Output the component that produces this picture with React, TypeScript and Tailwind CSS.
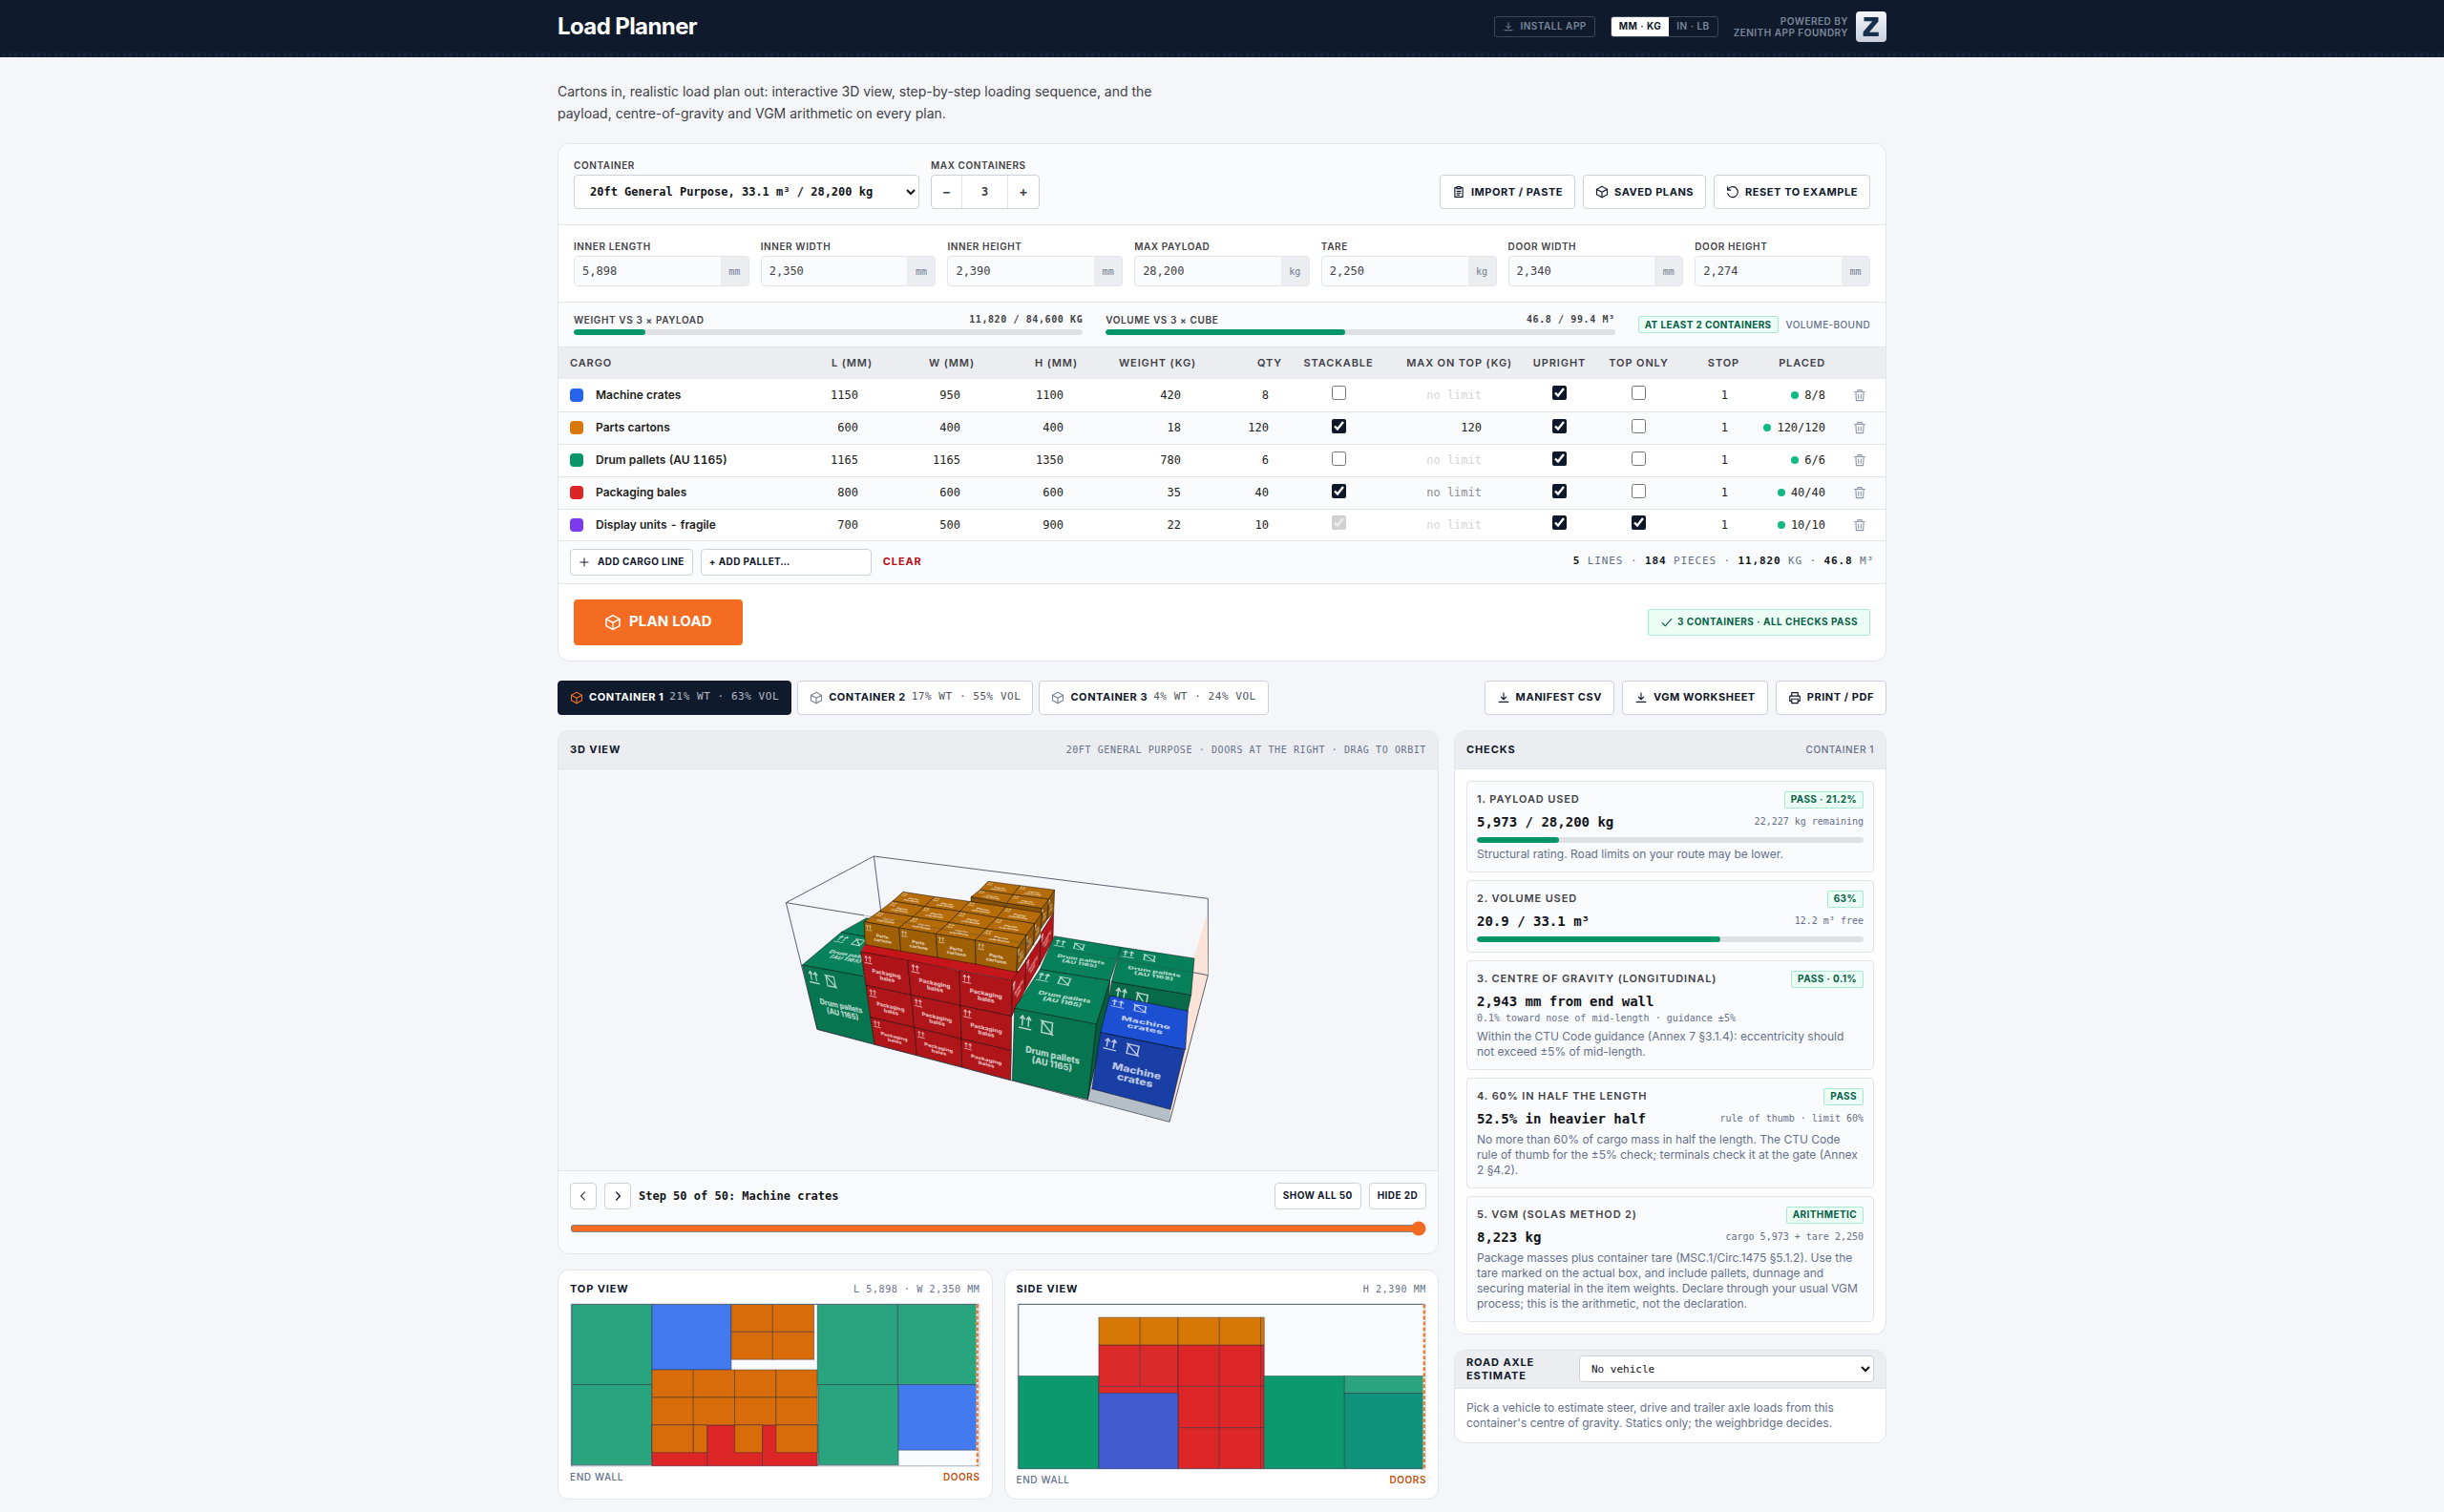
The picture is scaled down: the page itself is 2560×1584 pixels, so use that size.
import { useState } from "react";
import type { ReactNode } from "react";

const MONO = "font-['DejaVu_Sans_Mono',monospace]";
const LINE = "border-[#e1e4e8]";
const LABEL = "text-[10px] leading-3 font-semibold tracking-[0.06em] uppercase text-[#3f4146]";

/* ---------- Icons ---------- */

type IconProps = { size?: string; className?: string };

function Icon({ size = "size-3.5", className = "", children }: IconProps & { children: ReactNode }) {
  return (
    <svg
      viewBox="0 0 16 16"
      fill="none"
      stroke="currentColor"
      strokeWidth="1.3"
      strokeLinecap="round"
      strokeLinejoin="round"
      aria-hidden="true"
      className={`${size} shrink-0 ${className}`}
    >
      {children}
    </svg>
  );
}

const CubeIcon = (p: IconProps) => (
  <Icon {...p}>
    <path d="M8 1.5 14.3 5v6.2L8 14.6 1.7 11.2V5z" />
    <path d="M1.7 5 8 8.2 14.3 5M8 8.2v6.4" />
  </Icon>
);
const DownloadIcon = (p: IconProps) => (
  <Icon {...p}>
    <path d="M8 2.5v7.3M5 7l3 3 3-3M2.5 13h11" />
  </Icon>
);
const ClipboardIcon = (p: IconProps) => (
  <Icon {...p}>
    <path d="M5.5 3H3.3v11.2h9.4V3h-2.2M5.7 1.8h4.6v2.4H5.7zM5.8 7.3h4.4M5.8 9.4h4.4M5.8 11.5h3" />
  </Icon>
);
const ResetIcon = (p: IconProps) => (
  <Icon {...p}>
    <path d="M1.8 2v3.8h3.8M2.2 5.6a6.2 6.2 0 1 1-.3 4.2" />
  </Icon>
);
const PrintIcon = (p: IconProps) => (
  <Icon {...p}>
    <path d="M4.3 5.8V1.8h7.4v4M4.3 11.8H2V5.8h12v6h-2.3M4.3 9.4h7.4v5H4.3z" />
  </Icon>
);
const PlusIcon = (p: IconProps) => (
  <Icon {...p}>
    <path d="M8 2.5v11M2.5 8h11" />
  </Icon>
);
const CheckIcon = (p: IconProps) => (
  <Icon {...p}>
    <path d="M2.5 8.8 6 12.3 13.5 3.8" />
  </Icon>
);
const TrashIcon = (p: IconProps) => (
  <Icon {...p}>
    <path d="M1.8 4h12.4M5.5 4V1.8h5V4M3.3 4l.6 10.4h8.2L12.7 4M6.5 7v4.8M9.5 7v4.8" />
  </Icon>
);
const PrevIcon = () => (
  <Icon size="size-3">
    <path d="M10 2.5 4.8 8l5.2 5.5" strokeWidth="1.5" />
  </Icon>
);
const NextIcon = () => (
  <Icon size="size-3">
    <path d="M6 2.5 11.2 8 6 13.5" strokeWidth="1.8" />
  </Icon>
);

/* ---------- Small parts ---------- */

function Button({ children }: { children: ReactNode }) {
  return (
    <button
      type="button"
      className="flex h-9 items-center gap-1.5 rounded border border-[#ccd1d8] bg-white px-3 text-[11px] font-bold tracking-[0.05em] whitespace-nowrap uppercase text-[#0f172a]"
    >
      {children}
    </button>
  );
}

function SmallButton({ children }: { children: ReactNode }) {
  return (
    <button
      type="button"
      className="flex h-7 items-center gap-1.5 rounded border border-[#ccd1d8] bg-white px-2 text-[10px] font-bold tracking-[0.04em] whitespace-nowrap uppercase text-[#0f172a]"
    >
      {children}
    </button>
  );
}

function Badge({ children }: { children: ReactNode }) {
  return (
    <span className="inline-flex h-[18px] items-center rounded-xs border border-[#a7ecd0] bg-[#ecfdf5] px-1.5 text-[10px] font-bold tracking-[0.04em] whitespace-nowrap uppercase text-[#065f46]">
      {children}
    </span>
  );
}

function Bar({ value }: { value: number }) {
  return (
    <div className="h-1.5 overflow-hidden rounded-full bg-[#e0e1e3]">
      <div className="h-full rounded-full bg-[#059669]" style={{ width: `${value}%` }} />
    </div>
  );
}

/* ---------- Header ---------- */

function Header() {
  return (
    <header className="bg-[#0f1b2d]">
      <div className="mx-auto flex h-[55px] max-w-[1440px] items-center justify-between px-6">
        <h1 className="text-2xl font-bold tracking-tight text-white">Load Planner</h1>
        <div className="flex items-center gap-4 text-[10px] font-semibold tracking-[0.05em] uppercase text-[#7c879b]">
          <button type="button" className="flex h-[22px] items-center gap-1.5 rounded-[3px] border border-[#3b4657] px-2 uppercase">
            <DownloadIcon size="size-3" />
            Install app
          </button>
          <div className="flex h-[22px] overflow-hidden rounded-[3px] border border-[#3b4657]">
            <button type="button" className="bg-white px-2 font-bold uppercase text-[#0f172a]">
              mm · kg
            </button>
            <button type="button" className="px-2 uppercase">
              in · lb
            </button>
          </div>
          <a href="#foundry" className="flex items-center gap-2 text-right leading-3">
            <span>
              Powered by
              <br />
              Zenith App Foundry
            </span>
            <svg viewBox="0 0 32 32" className="size-8" aria-label="Zenith logo">
              <defs>
                <linearGradient id="logo" x1="0" y1="0" x2="0" y2="1">
                  <stop offset="0" stopColor="#f3f5f9" />
                  <stop offset="1" stopColor="#c9d0dc" />
                </linearGradient>
              </defs>
              <rect width="32" height="32" rx="4" fill="url(#logo)" />
              <path d="M8.5 6h15v4.6L14 21.8h9.8V26H7.6v-4.4L17.2 10.2H8.5z" fill="#16304b" />
            </svg>
          </a>
        </div>
      </div>
      <div className="h-[5px] bg-[repeating-linear-gradient(90deg,#0f1b2d_0_3px,#15233f_3px_6px)]" />
    </header>
  );
}

/* ---------- Container set-up and cargo ---------- */

const DIMS = [
  ["Inner length", "5,898", "mm"],
  ["Inner width", "2,350", "mm"],
  ["Inner height", "2,390", "mm"],
  ["Max payload", "28,200", "kg"],
  ["Tare", "2,250", "kg"],
  ["Door width", "2,340", "mm"],
  ["Door height", "2,274", "mm"],
];

type Cargo = {
  name: string;
  color: string;
  dims: string[];
  weight: string;
  qty: string;
  stackable: boolean;
  locked?: boolean;
  noLimit: "off" | "on" | "set";
  topOnly?: boolean;
  placed: string;
};

const CARGO: Cargo[] = [
  { name: "Machine crates", color: "bg-[#2563eb]", dims: ["1150", "950", "1100"], weight: "420", qty: "8", stackable: false, noLimit: "off", placed: "8/8" },
  { name: "Parts cartons", color: "bg-[#d97706]", dims: ["600", "400", "400"], weight: "18", qty: "120", stackable: true, noLimit: "set", placed: "120/120" },
  { name: "Drum pallets (AU 1165)", color: "bg-[#059669]", dims: ["1165", "1165", "1350"], weight: "780", qty: "6", stackable: false, noLimit: "off", placed: "6/6" },
  { name: "Packaging bales", color: "bg-[#dc2626]", dims: ["800", "600", "600"], weight: "35", qty: "40", stackable: true, noLimit: "on", placed: "40/40" },
  { name: "Display units - fragile", color: "bg-[#7c3aed]", dims: ["700", "500", "900"], weight: "22", qty: "10", stackable: true, locked: true, noLimit: "off", topOnly: true, placed: "10/10" },
];

const COLS = ["", "w-[107px]", "w-[107px]", "w-[108px]", "w-[124px]", "w-[90px]", "w-[102px]", "w-[139px]", "w-[83px]", "w-[83px]", "w-[72px]", "w-[90px]", "w-[55px]"];
const HEADS: [string, string][] = [
  ["Cargo", "text-left pl-3"],
  ["L (mm)", "text-right"],
  ["W (mm)", "text-right"],
  ["H (mm)", "text-right"],
  ["Weight (kg)", "text-right"],
  ["Qty", "text-right"],
  ["Stackable", "text-center"],
  ["Max on top (kg)", "text-right"],
  ["Upright", "text-center"],
  ["Top only", "text-center"],
  ["Stop", "text-right"],
  ["Placed", "text-right"],
];

type NumberCellProps = { label: string; value: string; pad?: string; placeholder?: string; faint?: boolean; disabled?: boolean };

function NumberCell({ label, value, pad = "pr-6", placeholder, faint, disabled }: NumberCellProps) {
  return (
    <td className={pad}>
      <input
        aria-label={label}
        defaultValue={value}
        placeholder={placeholder}
        disabled={disabled}
        className={`block w-full bg-transparent text-right text-xs text-[#1c1d20] ${faint ? "placeholder:text-[#d3d5d9]" : "placeholder:text-[#8b8e94]"} ${MONO}`}
      />
    </td>
  );
}

function TickCell({ label, checked, disabled }: { label: string; checked?: boolean; disabled?: boolean }) {
  return (
    <td className="pb-1 text-center">
      <input type="checkbox" aria-label={label} defaultChecked={checked} disabled={disabled} className="mx-auto block size-[15px] accent-[#0f172a]" />
    </td>
  );
}

function CargoTable() {
  return (
    <table className="w-full table-fixed border-collapse">
      <colgroup>
        {COLS.map((w, i) => (
          <col key={i} className={w} />
        ))}
      </colgroup>
      <thead>
        <tr className="h-[33px] bg-[#ecedf1] text-[11px] tracking-[0.08em] whitespace-nowrap uppercase text-[#3f4146]">
          {HEADS.map(([text, align]) => (
            <th key={text} scope="col" className={`px-2 font-semibold ${align}`}>
              {text}
            </th>
          ))}
          <th aria-label="Remove" />
        </tr>
      </thead>
      <tbody>
        {CARGO.map((c) => (
          <tr key={c.name} className={`h-[34px] border-b last:h-[33px] ${LINE} bg-white even:bg-[#fafbfd]`}>
            <td className="pl-3">
              <div className="flex items-center gap-[13px]">
                <button type="button" aria-label={`${c.name} colour`} className={`size-3.5 shrink-0 rounded ${c.color}`} />
                <input aria-label="Cargo name" defaultValue={c.name} className="w-full bg-transparent text-xs font-semibold text-[#1c1d20] tabular-nums" />
              </div>
            </td>
            {c.dims.map((d, i) => (
              <NumberCell key={i} label={["Length", "Width", "Height"][i]} value={d} pad="pr-[23px]" />
            ))}
            <NumberCell label="Weight" value={c.weight} />
            <NumberCell label="Quantity" value={c.qty} pad="pr-[22px]" />
            <TickCell label="Stackable" checked={c.stackable} disabled={c.locked} />
            <NumberCell label="Max on top" value={c.noLimit === "set" ? "120" : ""} pad="pr-10" placeholder="no limit" faint={c.noLimit === "off"} disabled={c.noLimit === "off"} />
            <TickCell label="Upright" checked />
            <TickCell label="Top only" checked={c.topOnly} />
            <NumberCell label="Stop" value="1" pad="pr-5" />
            <td className="pr-2">
              <div className={`flex items-center justify-end gap-1.5 text-xs text-[#1c1d20] ${MONO}`}>
                <span className="size-2 rounded-full bg-[#10b981]" />
                {c.placed}
              </div>
            </td>
            <td>
              <button type="button" aria-label={`Remove ${c.name}`} className="mx-auto block text-[#8f99ab]">
                <TrashIcon />
              </button>
            </td>
          </tr>
        ))}
      </tbody>
    </table>
  );
}

function Setup() {
  const [count, setCount] = useState(3);
  return (
    <section className={`overflow-hidden rounded-xl border ${LINE} bg-white`}>
      <div className={`flex items-end justify-between border-b ${LINE} bg-[#fafbfd] p-4`}>
        <div className="flex gap-3">
          <div className="flex flex-col gap-1">
            <label htmlFor="container" className={LABEL}>
              Container
            </label>
            <select id="container" className={`h-9 w-[362px] rounded border border-[#ccd1d8] bg-white px-3 text-xs font-bold text-[#111318] ${MONO}`}>
              <option>20ft General Purpose, 33.1 m³ / 28,200 kg</option>
            </select>
          </div>
          <div className="flex flex-col gap-1">
            <label htmlFor="count" className={LABEL}>
              Max containers
            </label>
            <div className="flex h-9 divide-x divide-[#e1e4e8] overflow-hidden rounded border border-[#ccd1d8] bg-white text-sm font-semibold text-[#3f4146]">
              <button type="button" aria-label="Fewer" onClick={() => setCount(Math.max(1, count - 1))} className="w-8">
                −
              </button>
              <input id="count" readOnly value={count} className={`w-12 text-center text-xs font-bold ${MONO}`} />
              <button type="button" aria-label="More" onClick={() => setCount(count + 1)} className="w-8">
                +
              </button>
            </div>
          </div>
        </div>
        <div className="flex gap-2">
          <Button>
            <ClipboardIcon />
            Import / paste
          </Button>
          <Button>
            <CubeIcon />
            Saved plans
          </Button>
          <Button>
            <ResetIcon />
            Reset to example
          </Button>
        </div>
      </div>

      <div className={`grid grid-cols-7 gap-3 border-b ${LINE} p-4`}>
        {DIMS.map(([label, value, unit]) => (
          <label key={label} className="flex flex-col gap-1">
            <span className={LABEL}>{label}</span>
            <span className={`flex h-8 overflow-hidden rounded border ${LINE} bg-[#fafbfd] ${MONO}`}>
              <input readOnly value={value} className="min-w-0 flex-1 px-2 text-xs text-[#3f4146]" />
              <span className="grid w-[29px] place-items-center bg-[#ecedf1] text-[10px] text-[#707b8f]">{unit}</span>
            </span>
          </label>
        ))}
      </div>

      <div className={`flex items-center gap-6 border-b ${LINE} bg-[#fafbfd] px-4 py-3`}>
        {(
          [
            ["Weight vs 3 × payload", "11,820 / 84,600 kg", 14],
            ["Volume vs 3 × cube", "46.8 / 99.4 m³", 47],
          ] as [string, string, number][]
        ).map(([label, value, pct]) => (
          <div key={label} className="flex flex-1 flex-col gap-1">
            <div className={`flex justify-between ${LABEL}`}>
              <span>{label}</span>
              <span className={MONO}>{value}</span>
            </div>
            <Bar value={pct} />
          </div>
        ))}
        <div className="flex items-center gap-2">
          <Badge>At least 2 containers</Badge>
          <span className="text-[10px] font-medium tracking-[0.04em] whitespace-nowrap uppercase text-[#64708a]">Volume-bound</span>
        </div>
      </div>

      <CargoTable />

      <div className={`flex items-center justify-between border-b ${LINE} bg-[#fafbfd] px-3 py-2`}>
        <div className="flex items-center gap-2">
          <SmallButton>
            <PlusIcon size="size-3" className="mr-0.5" />
            Add cargo line
          </SmallButton>
          <select
            aria-label="Add pallet"
            className="h-7 w-[179px] appearance-none rounded border border-[#ccd1d8] bg-white px-2 text-[10px] font-bold tracking-[0.04em] uppercase text-[#0f172a]"
          >
            <option>+ Add pallet…</option>
          </select>
          <button type="button" className="px-1 text-[11px] font-bold tracking-[0.08em] uppercase text-[#b80d14]">
            Clear
          </button>
        </div>
        <p className={`text-[11px] tracking-[0.08em] uppercase text-[#64708a] ${MONO}`}>
          <b className="text-[#111318]">5</b> lines · <b className="text-[#111318]">184</b> pieces · <b className="text-[#111318]">11,820</b> kg · <b className="text-[#111318]">46.8</b> m³
        </p>
      </div>

      <div className="flex items-center justify-between p-4">
        <button type="button" className="flex h-12 items-center gap-2 rounded bg-[#f36c21] px-8 text-[15px] font-bold tracking-[0.01em] uppercase text-white">
          <CubeIcon size="size-[18px]" />
          Plan load
        </button>
        <span className="flex h-7 items-center gap-1 rounded-xs border border-[#a7ecd0] bg-[#ecfdf5] px-3 text-[10px] font-bold tracking-[0.05em] uppercase text-[#065f46]">
          <CheckIcon />3 containers · all checks pass
        </span>
      </div>
    </section>
  );
}

/* ---------- Result tabs ---------- */

const TABS = [
  ["Container 1", "21% wt · 63% vol"],
  ["Container 2", "17% wt · 55% vol"],
  ["Container 3", "4% wt · 24% vol"],
];

function Tabs() {
  const [active, setActive] = useState(0);
  return (
    <div className="mt-5 flex items-center justify-between">
      <div role="tablist" className="flex gap-1.5">
        {TABS.map(([name, info], i) => (
          <button
            key={name}
            type="button"
            role="tab"
            aria-selected={i === active}
            onClick={() => setActive(i)}
            className={`flex h-9 items-center gap-1.5 rounded border px-3 text-[11px] tracking-[0.05em] whitespace-nowrap uppercase ${
              i === active ? "border-[#0f1b2d] bg-[#0f1b2d] text-white" : "border-[#ccd1d8] bg-white text-[#0f172a]"
            }`}
          >
            <CubeIcon className={i === active ? "text-[#f36c21]" : "text-[#7a8599]"} />
            <span className="font-bold">{name}</span>
            <span className={`${MONO} ${i === active ? "text-[#b4bcc9]" : "text-[#4d525b]"}`}>{info}</span>
          </button>
        ))}
      </div>
      <div className="flex gap-2">
        <Button>
          <DownloadIcon />
          Manifest CSV
        </Button>
        <Button>
          <DownloadIcon />
          VGM worksheet
        </Button>
        <Button>
          <PrintIcon />
          Print / PDF
        </Button>
      </div>
    </div>
  );
}

/* ---------- 3D view ---------- */

type Pt = [number, number];
type Quad = [Pt, Pt, Pt, Pt]; // top-left, top-right, bottom-right, bottom-left
type Kind = "drum" | "bale" | "carton" | "crate";

const FACE_TEXT: Record<Kind, { lines: string[]; size: number; h: number; box: boolean }> = {
  drum: { lines: ["Drum pallets", "(AU 1165)"], size: 11, h: 90, box: true },
  bale: { lines: ["Packaging", "bales"], size: 12, h: 74, box: false },
  carton: { lines: ["Parts", "cartons"], size: 13, h: 68, box: false },
  crate: { lines: ["Machine", "crates"], size: 14, h: 88, box: true },
};

const poly = (q: Pt[]) => q.map((p) => p.join(",")).join(" ");

function Face({ q, fill, kind }: { q: Quad; fill: string; kind?: Kind }) {
  const [tl, tr, br, bl] = q;
  const t = kind && FACE_TEXT[kind];
  const h = t ? t.h : 100;
  const u = [0, 1].map((i) => (tr[i] - tl[i] + br[i] - bl[i]) / 200);
  const v = [0, 1].map((i) => (bl[i] - tl[i] + br[i] - tr[i]) / 2 / h);
  const c = [0, 1].map((i) => (tl[i] + tr[i] + br[i] + bl[i]) / 4);
  return (
    <g>
      <polygon points={poly(q)} fill={fill} stroke="#000" strokeOpacity="0.45" strokeWidth="3" strokeLinejoin="round" />
      {t && (
        <g transform={`matrix(${u[0]} ${u[1]} ${v[0]} ${v[1]} ${c[0]} ${c[1]})`} opacity="0.7">
          <g transform={`translate(-45 ${-h / 2 + 7})`} fill="none" stroke="#fff" strokeWidth="1.8">
            <path d="M4 13V1M1 5l3-4 3 4M12 13V1M9 5l3-4 3 4M0 16h16" />
            {t.box && <path d="M29 2h13v14H29zM27 1l17 16" />}
          </g>
          <text textAnchor="middle" fontFamily="Inter, sans-serif" fontWeight="800" fontSize={t.size} fill="#fff">
            <tspan x="0" y={h * 0.07}>
              {t.lines[0]}
            </tspan>
            <tspan x="0" y={h * 0.07 + t.size}>
              {t.lines[1]}
            </tspan>
          </text>
        </g>
      )}
    </g>
  );
}

function Mesh({ rows, fill, kind }: { rows: Pt[][]; fill: string; kind?: Kind }) {
  return (
    <>
      {rows.slice(1).map((row, r) =>
        row.slice(1).map((_, c) => <Face key={`${r}-${c}`} q={[rows[r][c], rows[r][c + 1], row[c + 1], row[c]]} fill={fill} kind={kind} />),
      )}
    </>
  );
}

const BALE_FRONT: Pt[][] = [
  [[302, 384], [449, 411], [612, 443], [778, 474]],
  [[318, 490], [460, 520], [615, 553], [776, 587]],
  [[332, 590], [470, 622], [618, 658], [775, 695]],
  [[345, 676], [478, 710], [620, 747], [773, 788]],
];
const CARTON_TOP: Pt[][] = [
  [[435, 196], [533, 211], [643, 226], [757, 243], [872, 262]],
  [[402, 225], [502, 242], [613, 257], [729, 277], [848, 296]],
  [[360, 257], [466, 274], [580, 292], [695, 312], [822, 332]],
  [[312, 290], [422, 309], [538, 328], [661, 348], [795, 372]],
];
const CARTON_FRONT: Pt[][] = [
  [[312, 290], [422, 309], [538, 328], [661, 348], [795, 372]],
  [[316, 362], [428, 382], [543, 402], [664, 423], [790, 448]],
];
const CARTON_BACK: Pt[][] = [
  [[702, 163], [802, 176], [911, 190]],
  [[676, 190], [780, 205], [893, 219]],
  [[648, 212], [760, 232], [870, 248]],
];

function View3D() {
  return (
    <svg viewBox="0 0 1470 990" className="h-[330px] w-[490px]" role="img" aria-label="Loaded container, seen from the near side">
      <g fill="none" stroke="#3a4250" strokeWidth="2.5">
        <path d="M67 230 343 84 1393 217M343 84 368 280M165 628 67 230M1393 217V458" />
      </g>
      <polygon points="1391,262 1347,408 1340,520 1328,600 1318,690 1275,880 1272,919 1393,458" fill="#fbe3d8" />
      <polygon points="1020,812 1276,878 1272,917 1012,849" fill="#b6bfc8" />

      <Face q={[[320, 278], [400, 300], [380, 350], [240, 323]]} fill="#068159" />
      <Face q={[[240, 323], [425, 356], [308, 461], [118, 426]]} fill="#068159" kind="drum" />
      <Face q={[[118, 426], [320, 463], [352, 677], [165, 628]]} fill="#077650" kind="drum" />

      <polygon points="315,360 800,445 778,474 302,384" fill="#c4161b" />
      <Mesh rows={BALE_FRONT} fill="#b01519" kind="bale" />
      <Face q={[[778, 474], [822, 410], [818, 505], [776, 587]]} fill="#b3161a" kind="bale" />
      <Face q={[[822, 410], [868, 340], [864, 425], [818, 505]]} fill="#b3161a" kind="bale" />
      <Face q={[[868, 325], [908, 262], [906, 345], [864, 425]]} fill="#b3161a" kind="bale" />

      <Mesh rows={CARTON_BACK} fill="#b56c08" kind="carton" />
      <Face q={[[648, 212], [757, 232], [757, 246], [648, 228]]} fill="#8a5205" />
      <Face q={[[760, 232], [870, 248], [872, 264], [757, 246]]} fill="#8a5205" />
      <Face q={[[870, 248], [893, 219], [888, 282], [868, 312]]} fill="#945805" kind="carton" />
      <Face q={[[893, 219], [911, 190], [908, 262], [888, 282]]} fill="#945805" kind="carton" />
      <Mesh rows={CARTON_TOP} fill="#b56c08" kind="carton" />
      <Face q={[[848, 296], [872, 262], [866, 325], [844, 362]]} fill="#945805" kind="carton" />
      <Face q={[[822, 332], [848, 296], [844, 362], [818, 403]]} fill="#945805" kind="carton" />
      <Face q={[[795, 372], [822, 332], [818, 403], [790, 448]]} fill="#945805" kind="carton" />
      <Mesh rows={CARTON_FRONT} fill="#9f5f05" kind="carton" />

      <Face q={[[1090, 478], [1340, 520], [1290, 760], [1060, 700]]} fill="#076b49" kind="drum" />
      <Face q={[[910, 335], [1120, 370], [1085, 475], [865, 440]]} fill="#068159" kind="drum" />
      <Face q={[[1120, 370], [1350, 405], [1340, 520], [1090, 478]]} fill="#068159" kind="drum" />
      <Face q={[[1042, 612], [1085, 475], [1080, 560], [1015, 848]]} fill="#075c40" />
      <Face q={[[865, 440], [1085, 475], [1042, 612], [785, 562]]} fill="#068159" kind="drum" />
      <Face q={[[785, 562], [1042, 612], [1015, 848], [778, 788]]} fill="#077650" kind="drum" />
      <Face q={[[1085, 522], [1330, 570], [1322, 692], [1055, 638]]} fill="#1d4fd2" kind="crate" />
      <Face q={[[1055, 638], [1320, 692], [1275, 880], [1028, 815]]} fill="#193fa6" kind="crate" />

      <g fill="none" stroke="#3a4250" strokeWidth="2.5">
        <path d="M1393 458 1272 919 165 628" />
        <path d="M67 230 312 270M1345 449 1393 458" />
        <path d="M312 270 1345 449" strokeOpacity="0.4" />
      </g>
    </svg>
  );
}

/* ---------- Plan and side views (millimetres) ---------- */

type Box = [number, number, number, number, string];

const GREEN = "#2aa47f";
const TOP_BOXES: Box[] = [
  [0, 0, 1165, 1165, GREEN],
  [0, 1165, 1165, 1165, GREEN],
  [1165, 0, 1150, 950, "#447af0"],
  [1165, 1750, 800, 600, "#dc2627"],
  [1965, 1750, 800, 600, "#dc2627"],
  [2765, 1750, 800, 600, "#dc2627"],
  [2315, 0, 600, 400, "#d86c0b"],
  [2915, 0, 600, 400, "#d86c0b"],
  [2315, 400, 600, 400, "#d86c0b"],
  [2915, 400, 600, 400, "#d86c0b"],
  ...[0, 1, 2, 3].flatMap((c) => [0, 1].map((r): Box => [1165 + c * 600, 950 + r * 400, 600, 400, "#d86c0b"])),
  [1165, 1750, 600, 400, "#d86c0b"],
  [1765, 1750, 200, 400, "#d86c0b"],
  [2365, 1750, 400, 400, "#d86c0b"],
  [2965, 1750, 600, 400, "#d86c0b"],
  [3565, 0, 1165, 1165, GREEN],
  [4730, 0, 1165, 1165, GREEN],
  [3575, 1165, 1165, 1165, GREEN],
  [4740, 1165, 1150, 950, "#447af0"],
];

const SIDE_BOXES: Box[] = [
  [0, 1040, 1165, 1350, "#0c996b"],
  ...[1165, 1765].map((x): Box => [x, 590, x === 1165 ? 600 : 550, 600, "#dc292a"]),
  [1165, 1190, 1150, 100, "#dc292a"],
  ...[590, 1190, 1790].flatMap((y): Box[] => [
    [2315, y, 600, 600, "#dc2627"],
    [2915, y, 600, 600, "#dc2627"],
    [3515, y, 50, 600, "#dc2627"],
  ]),
  [1165, 190, 600, 400, "#d77706"],
  [1765, 190, 550, 400, "#d77706"],
  [2315, 190, 600, 400, "#d77706"],
  [2915, 190, 600, 400, "#d77706"],
  [3515, 190, 50, 400, "#d77706"],
  [1165, 1290, 1150, 1100, "#425bce"],
  [3565, 1040, 1165, 1350, "#0c996b"],
  [4730, 1040, 1165, 250, GREEN],
  [4730, 1290, 1165, 1100, "#10917b"],
];

function Elevation({ title, note, depth, boxes }: { title: string; note: string; depth: number; boxes: Box[] }) {
  return (
    <section className={`rounded-xl border ${LINE} bg-white p-3`}>
      <div className="flex h-4 items-center justify-between">
        <h3 className="text-[11px] font-bold tracking-[0.08em] uppercase text-[#0f172a]">{title}</h3>
        <span className={`text-[10px] font-medium tracking-[0.06em] uppercase text-[#64708a] ${MONO}`}>{note}</span>
      </div>
      <svg viewBox={`-25 -20 5948 ${depth + 40}`} className="mt-1.5 block w-full rounded-xs bg-[#f9fafd] outline-1 -outline-offset-1 outline-[#dfe8ee]" role="img" aria-label={title}>
        {boxes.map(([x, y, w, h, fill], i) => (
          <rect key={i} x={x} y={y} width={w} height={h} fill={fill} stroke="#1c2430" strokeOpacity="0.45" strokeWidth="13" />
        ))}
        <rect width="5898" height={depth} fill="none" stroke="#5b6579" strokeWidth="14" />
        <path d={`M5885 0V${depth}`} stroke="#fff" strokeWidth="30" />
        <path d={`M5885 0V${depth}`} stroke="#ee7224" strokeWidth="30" strokeDasharray="55 28" />
      </svg>
      <div className="mt-0.5 flex justify-between text-[10px] leading-4 font-medium tracking-[0.06em] uppercase text-[#64708a]">
        <span>End wall</span>
        <span className="font-semibold text-[#c2500f]">Doors</span>
      </div>
    </section>
  );
}

function Viewer() {
  return (
    <section className={`overflow-hidden rounded-xl border ${LINE} bg-[#fafbfd]`}>
      <div className={`flex h-10 items-center justify-between border-b ${LINE} bg-[#ecedf1] px-3`}>
        <h2 className="text-[11px] font-bold tracking-[0.08em] uppercase text-[#0f172a]">3D view</h2>
        <span className={`text-[10px] font-medium tracking-[0.06em] uppercase text-[#64708a] ${MONO}`}>20ft General Purpose · doors at the right · drag to orbit</span>
      </div>
      <div className={`grid h-[421px] place-items-center border-b ${LINE} bg-[#f4f6fa] pt-9`}>
        <View3D />
      </div>
      <div className="px-3 pt-3 pb-[18px]">
        <div className="flex items-center gap-2">
          <button type="button" aria-label="Previous step" className="grid size-7 place-items-center rounded border border-[#ccd1d8] bg-white text-[#3f4146]">
            <PrevIcon />
          </button>
          <button type="button" aria-label="Next step" className="grid size-7 place-items-center rounded border border-[#ccd1d8] bg-white text-[#0f172a]">
            <NextIcon />
          </button>
          <span className={`mr-auto text-xs font-bold text-[#111318] ${MONO}`}>Step 50 of 50: Machine crates</span>
          <SmallButton>Show all 50</SmallButton>
          <SmallButton>Hide 2D</SmallButton>
        </div>
        <input type="range" aria-label="Loading step" min={1} max={50} defaultValue={50} className="mt-3 block h-4 w-full accent-[#f36c21]" />
      </div>
    </section>
  );
}

/* ---------- Checks ---------- */

type Check = { title: string; badge: string; value: string; side?: string; sub?: string; bar?: number; text?: string };

const CHECKS: Check[] = [
  { title: "1. Payload used", badge: "Pass · 21.2%", value: "5,973 / 28,200 kg", side: "22,227 kg remaining", bar: 21.2, text: "Structural rating. Road limits on your route may be lower." },
  { title: "2. Volume used", badge: "63%", value: "20.9 / 33.1 m³", side: "12.2 m³ free", bar: 63 },
  {
    title: "3. Centre of gravity (longitudinal)",
    badge: "Pass · 0.1%",
    value: "2,943 mm from end wall",
    sub: "0.1% toward nose of mid-length · guidance ±5%",
    text: "Within the CTU Code guidance (Annex 7 §3.1.4): eccentricity should not exceed ±5% of mid-length.",
  },
  {
    title: "4. 60% in half the length",
    badge: "Pass",
    value: "52.5% in heavier half",
    side: "rule of thumb · limit 60%",
    text: "No more than 60% of cargo mass in half the length. The CTU Code rule of thumb for the ±5% check; terminals check it at the gate (Annex 2 §4.2).",
  },
  {
    title: "5. VGM (SOLAS method 2)",
    badge: "Arithmetic",
    value: "8,223 kg",
    side: "cargo 5,973 + tare 2,250",
    text: "Package masses plus container tare (MSC.1/Circ.1475 §5.1.2). Use the tare marked on the actual box, and include pallets, dunnage and securing material in the item weights. Declare through your usual VGM process; this is the arithmetic, not the declaration.",
  },
];

function CheckCard({ c }: { c: Check }) {
  return (
    <article className={`rounded border ${LINE} bg-[#fafbfd] p-2.5`}>
      <div className="flex items-center justify-between">
        <h3 className="text-[11px] font-semibold tracking-[0.08em] uppercase text-[#3f4146]">{c.title}</h3>
        <Badge>{c.badge}</Badge>
      </div>
      <div className={`mt-1 flex items-center justify-between ${MONO}`}>
        <span className="text-sm leading-5 font-bold text-[#111318]">{c.value}</span>
        {c.side && <span className="text-[10px] text-[#64708a]">{c.side}</span>}
      </div>
      {c.sub && <p className={`text-[10px] leading-[15px] text-[#64708a] ${MONO}`}>{c.sub}</p>}
      {c.bar !== undefined && (
        <div className="mt-1.5">
          <Bar value={c.bar} />
        </div>
      )}
      {c.text && <p className="mt-1 text-xs leading-4 text-[#64708a]">{c.text}</p>}
    </article>
  );
}

function Sidebar() {
  return (
    <div className="flex flex-col gap-4">
      <section className={`overflow-hidden rounded-xl border ${LINE} bg-white`}>
        <div className={`flex h-10 items-center justify-between border-b ${LINE} bg-[#ecedf1] px-3`}>
          <h2 className="text-[11px] font-bold tracking-[0.08em] uppercase text-[#0f172a]">Checks</h2>
          <span className="text-[10px] font-medium tracking-[0.06em] uppercase text-[#64708a]">Container 1</span>
        </div>
        <div className="flex flex-col gap-2 p-3">
          {CHECKS.map((c) => (
            <CheckCard key={c.title} c={c} />
          ))}
        </div>
      </section>
      <section className={`overflow-hidden rounded-xl border ${LINE} bg-white`}>
        <div className={`flex h-10 items-center gap-3 border-b ${LINE} bg-[#ecedf1] px-3`}>
          <label htmlFor="vehicle" className="flex-1 text-[11px] leading-3.5 font-bold tracking-[0.08em] uppercase text-[#0f172a]">
            Road axle estimate
          </label>
          <select id="vehicle" className={`h-7 w-[309px] rounded border border-[#ccd1d8] bg-white px-2 text-[11px] text-[#111318] ${MONO}`}>
            <option>No vehicle</option>
          </select>
        </div>
        <p className="p-3 text-xs leading-4 text-[#64708a]">
          Pick a vehicle to estimate steer, drive and trailer axle loads from this container's centre of gravity. Statics only; the weighbridge decides.
        </p>
      </section>
    </div>
  );
}

export default function App() {
  return (
    <div className="min-h-screen bg-[#f4f6fa] font-['Inter',sans-serif]">
      <Header />
      <main className="mx-auto max-w-[1440px] px-6 pt-6 pb-3">
        <p className="mb-5 max-w-2xl text-sm leading-[23px] text-[#3f4146]">
          Cartons in, realistic load plan out: interactive 3D view, step-by-step loading sequence, and the payload, centre-of-gravity and VGM arithmetic on every plan.
        </p>
        <Setup />
        <Tabs />
        <div className="mt-4 grid grid-cols-[minmax(0,1fr)_453px] items-start gap-4">
          <div className="flex flex-col gap-4">
            <Viewer />
            <div className="grid grid-cols-2 gap-3">
              <Elevation title="Top view" note="L 5,898 · W 2,350 mm" depth={2350} boxes={TOP_BOXES} />
              <Elevation title="Side view" note="H 2,390 mm" depth={2390} boxes={SIDE_BOXES} />
            </div>
          </div>
          <Sidebar />
        </div>
      </main>
    </div>
  );
}
